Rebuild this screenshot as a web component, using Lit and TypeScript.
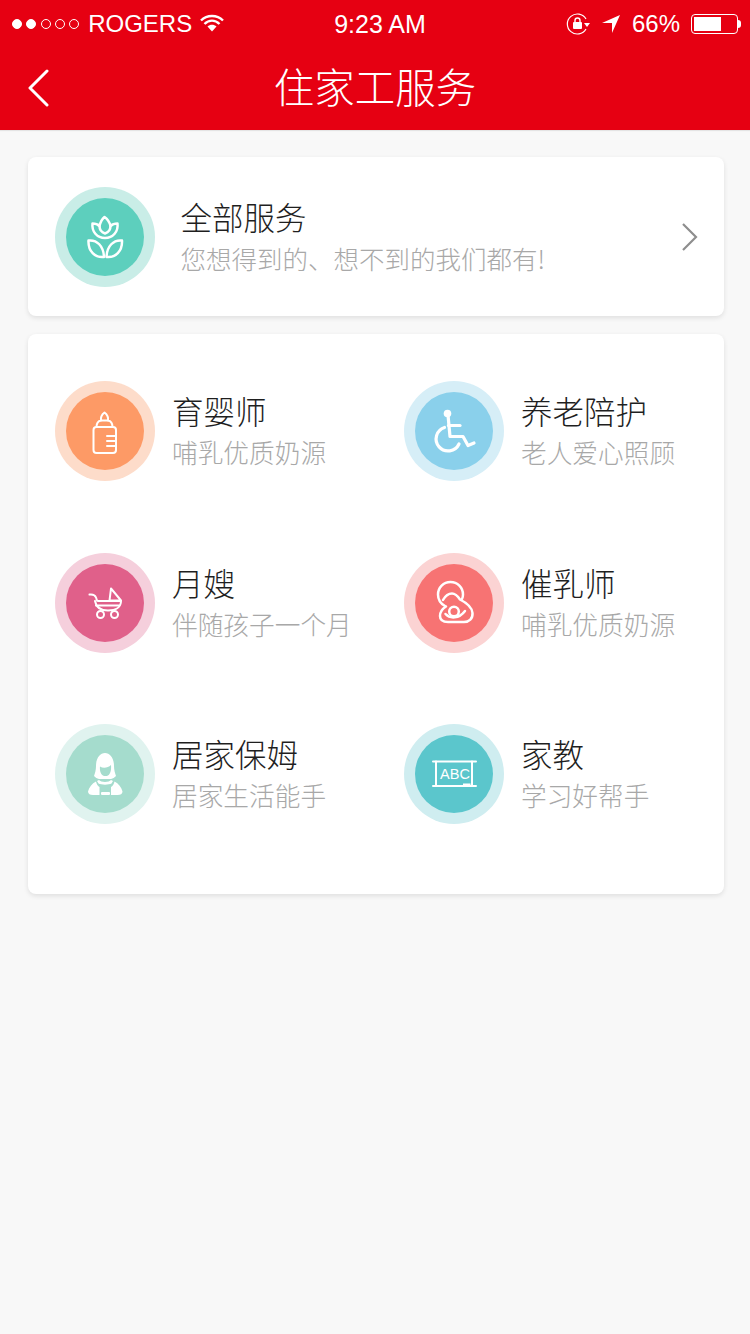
import { LitElement, html, css, svg } from 'lit';
import { customElement } from 'lit/decorators.js';

const flower = svg`
  <g class="line">
    <path d="M26.500 25.500C29.500 25.500 32 26.500 33.500 28C34.500 24 36 21 38.500 19C41.500 21 43.500 24 44.500 28C46 26.500 48.500 25.500 51.500 25.500C52.500 33.500 47 40 39 40C31 40 25.500 33.500 26.500 25.500Z" />
    <path d="M33.500 28C33.500 32 36 34.500 39 35.500C42 34.500 44.500 32 44.500 28" />
    <path d="M22.500 42.500C31 41.500 37.500 48 38 59C29 60 22 53 22.500 42.500Z" />
    <path d="M56 42.500C47.500 41.500 41 48 40.500 59C49.500 60 56.500 53 56 42.500Z" />
  </g>`;

const bottle = svg`
  <g class="line mid" transform="translate(-1 0)">
    <rect x="28.500" y="35" width="22.500" height="26" rx="3" />
    <path d="M31.500 35C31.500 31 33.500 29 36 28.500C35.500 25 37.500 22 39.500 20.500C41.500 22 43.500 25 43 28.500C45.500 29 47.500 31 47.500 35" />
    <path d="M36 28.500H43M42 44H50.500M42 49H50.500M42 54H50.500" />
  </g>`;

const wheelchair = svg`
  <circle class="solid" cx="32.500" cy="21.500" r="3.800" />
  <g class="line bold">
    <path d="M33 23L35 44.500H48L53 53.500L59 51" />
    <path d="M33.500 33.500H45" />
    <path d="M29.500 35.500A12 12 0 1 0 44 52" />
  </g>`;

const stroller = svg`
  <g class="line mid">
    <path d="M23.500 30.500C27 30 29 31 30 33.500C31 36 30.500 37 32 37H55C55 43 50 46.500 42 46.500C34 46.500 30 43 29 37" />
    <path d="M30 41.500H53.500" />
    <path d="M45 24.500L55 36.500H43.500Z" />
    <circle cx="34.500" cy="50.500" r="3.500" />
    <circle cx="48.500" cy="50.500" r="3.500" />
  </g>`;

const nursing = svg`
  <g class="line">
    <path d="M30 42C25.500 39.500 23 35.500 23 30.500C23 23.500 28.500 18 35.500 18C42.500 18 48 23.500 48 30.500C48 32 47.800 33.500 47 35" />
    <path d="M28 36C30 32.500 33.500 29.500 37 29.500C40.500 29.500 43 32.500 45 35.500C50 38 57 43 57.500 49C58 54.500 54 58 49 58H33C28 58 25 56 25 52C25 48 27 45 31 42.500" />
    <circle cx="39" cy="47.500" r="4.800" />
    <path d="M30.500 50C35 55 44 55 50 47" />
  </g>`;

const nanny = svg`
  <path class="solid" fill-rule="evenodd" d="M30 31C30 23 34 18 39 18C44 18 48 23 48 31C48 35 49 38 50 41C48.500 42.500 47 43.500 45 44C44.500 44 33.500 44 33 44C31 43.500 29.500 42.500 28 41C29 38 30 35 30 31ZM34 31.500C33.500 36 35 41 39.500 41C44 41 45.500 36 45 30C42 33 37 33.500 34 31.500Z" />
  <path class="solid" d="M33 45C35 47.500 43 47.500 45 45L47 46L45.500 48.500C43 50 35 50 32.500 48.500L31 46Z" />
  <path class="solid" d="M22 56.500C23 52.500 26 48.500 30 46.500C30.500 49 32 51.500 33.500 52V60H27C24 60 22 59 22 56.500Z" />
  <path class="solid" d="M56.500 56.500C55.500 52.500 52.500 48.500 48.500 46.500C48 49 46.500 51.500 45 52V60H51.500C54.500 60 56.500 59 56.500 56.500Z" />
  <rect class="solid" x="35" y="57" width="9" height="3" rx="1" />`;

const board = svg`
  <g class="line mid">
    <path d="M18 26.500H61M18 51H61" />
    <path d="M21 26.500V51M57 26.500V51" />
  </g>
  <rect class="solid" x="48" y="48.500" width="7.500" height="3" />
  <text class="abc" x="40" y="44" text-anchor="middle">ABC</text>`;

const services = [
  { title: '育婴师', sub: '哺乳优质奶源', tone: 'orange', icon: bottle },
  { title: '养老陪护', sub: '老人爱心照顾', tone: 'blue', icon: wheelchair },
  { title: '月嫂', sub: '伴随孩子一个月', tone: 'pink', icon: stroller },
  { title: '催乳师', sub: '哺乳优质奶源', tone: 'coral', icon: nursing },
  { title: '居家保姆', sub: '居家生活能手', tone: 'mint', icon: nanny },
  { title: '家教', sub: '学习好帮手', tone: 'cyan', icon: board },
];

@customElement('app-root')
export class AppRoot extends LitElement {
  static styles = css`
    :host {
      display: block;
      min-height: 1334px;
      background: #f8f8f8;
      font-family: 'Noto Sans CJK SC', 'Liberation Sans', sans-serif;
      font-weight: 300;
    }

    header {
      height: 130px;
      background: #e60012;
      color: #fff;
      box-shadow: 0 1px 1px rgba(0, 0, 0, 0.08);
    }

    .status {
      display: grid;
      grid-template-columns: 1fr auto 1fr;
      align-items: center;
      height: 48px;
      padding: 0 9px 0 12px;
      font-family: 'Liberation Sans', sans-serif;
      font-weight: 400;
      font-size: 24px;
    }

    .status > div {
      display: flex;
      align-items: center;
    }

    .status .right {
      justify-content: flex-end;
    }

    .status .time {
      padding-left: 7px;
      font-size: 25px;
    }

    .dots {
      display: flex;
      gap: 4.300px;
      margin-right: 9px;
    }

    .dots i {
      width: 10px;
      height: 10px;
      border-radius: 50%;
      border: 1px solid #fff;
      box-sizing: border-box;
    }

    .dots i.on {
      background: #fff;
    }

    .wifi {
      margin: 0 0 3px 8px;
    }

    .lock {
      margin-right: 12px;
    }

    .arrow {
      margin-right: 12px;
    }

    .battery {
      display: flex;
      align-items: center;
      margin-left: 11px;
    }

    .cell {
      box-sizing: border-box;
      width: 47px;
      height: 20px;
      padding: 2px;
      border: 1px solid #fff;
      border-radius: 4px;
    }

    .cell b {
      display: block;
      width: 27px;
      height: 100%;
      background: #fff;
    }

    .tip {
      width: 3px;
      height: 8px;
      background: #fff;
      border-radius: 0 3px 3px 0;
    }

    .nav {
      position: relative;
      display: flex;
      align-items: center;
      justify-content: center;
      height: 78px;
      padding-bottom: 4px;
      box-sizing: border-box;
      font-size: 40.500px;
    }

    .back {
      position: absolute;
      left: 27px;
      top: 21px;
    }

    main {
      display: flex;
      flex-direction: column;
      gap: 18px;
      padding: 27px 26px 0 28px;
    }

    .card {
      background: #fff;
      border-radius: 8px;
      box-shadow: 0 2px 5px rgba(0, 0, 0, 0.1);
    }

    .all {
      display: flex;
      align-items: center;
      height: 159px;
      padding: 0 26px 0 27px;
    }

    .all .text {
      flex: 1;
      margin-left: 25.500px;
    }

    .grid {
      display: grid;
      grid-template-columns: 349px 1fr;
      grid-auto-rows: 171.5px;
      height: 513px;
      padding: 47px 0 0 27px;
    }

    .item {
      display: flex;
      align-items: flex-start;
    }

    .item .text {
      margin-left: 17px;
      padding-top: 9px;
    }

    .item .sub {
      font-size: 25.700px;
    }

    .ring {
      display: flex;
      flex: none;
      align-items: center;
      justify-content: center;
      width: 100px;
      height: 100px;
      border-radius: 50%;
    }

    .disc {
      width: 78px;
      height: 78px;
      border-radius: 50%;
    }

    .disc svg {
      display: block;
    }

    .line {
      fill: none;
      stroke: #fff;
      stroke-width: 2.500;
      stroke-linecap: round;
      stroke-linejoin: round;
    }

    .line.mid {
      stroke-width: 2;
    }

    .line.bold {
      stroke-width: 3.200;
    }

    .solid {
      fill: #fff;
    }

    .abc {
      fill: #fff;
      font-family: 'Liberation Sans', sans-serif;
      font-size: 14.500px;
    }

    .teal { background: #c9ede7; }
    .teal .disc { background: #5dcfbd; }
    .orange { background: #fddcca; }
    .orange .disc { background: #fd9a66; }
    .blue { background: #d6eef7; }
    .blue .disc { background: #8ad0eb; }
    .pink { background: #f5cfdc; }
    .pink .disc { background: #e0608a; }
    .coral { background: #fbd3d3; }
    .coral .disc { background: #f77373; }
    .mint { background: #e0f3ef; }
    .mint .disc { background: #a5dccd; }
    .cyan { background: #cfedf0; }
    .cyan .disc { background: #5bc6cc; }

    .title {
      color: #1f1f1f;
      font-size: 31.500px;
      line-height: 41px;
      white-space: nowrap;
    }

    .sub {
      color: #a8a8a8;
      font-size: 25.500px;
      line-height: 41px;
      white-space: nowrap;
    }
  `;

  private ring(tone: string, icon: unknown) {
    return html`
      <div class="ring ${tone}">
        <div class="disc">
          <svg width="78" height="78" viewBox="0 0 78 78">${icon}</svg>
        </div>
      </div>
    `;
  }

  render() {
    return html`
      <header>
        <div class="status">
          <div>
            <span class="dots"><i class="on"></i><i class="on"></i><i></i><i></i><i></i></span>
            ROGERS
            <svg class="wifi" width="24" height="18" viewBox="0 0 24 18">
              <path d="M1 6.500C7 .5 17 .5 23 6.500M4.500 10C9 5.500 15 5.500 19.500 10" fill="none" stroke="#fff" stroke-width="2.400" />
              <path d="M7.500 12.500C10 10 14 10 16.500 12.500L12 17.500Z" fill="#fff" />
            </svg>
          </div>
          <div class="time">9:23 AM</div>
          <div class="right">
            <svg class="lock" width="24" height="22" viewBox="0 0 24 22">
              <path d="M20 16A10 10 0 1 1 20 6" fill="none" stroke="#fff" stroke-width="1.200" />
              <path d="M18 10H24L21 14Z" fill="#fff" />
              <rect x="7" y="9" width="9" height="7" rx="1" fill="#fff" />
              <path d="M9 9V7.500A2.500 2.500 0 0 1 14 7.500V9" fill="none" stroke="#fff" stroke-width="1.400" />
            </svg>
            <svg class="arrow" width="18" height="18" viewBox="0 0 18 18">
              <path d="M18 0L10 18V8H0Z" fill="#fff" />
            </svg>
            66%
            <span class="battery"><span class="cell"><b></b></span><span class="tip"></span></span>
          </div>
        </div>
        <div class="nav">
          <svg class="back" width="24" height="38" viewBox="0 0 24 38">
            <path d="M20 2L3 19L20 36" fill="none" stroke="#fff" stroke-width="3" stroke-linecap="round" stroke-linejoin="round" />
          </svg>
          住家工服务
        </div>
      </header>
      <main>
        <section class="card all">
          ${this.ring('teal', flower)}
          <div class="text">
            <div class="title">全部服务</div>
            <div class="sub">您想得到的、想不到的我们都有!</div>
          </div>
          <svg width="17" height="30" viewBox="0 0 17 30">
            <path d="M2 2L15 15L2 28" fill="none" stroke="#8e8e8e" stroke-width="2.200" />
          </svg>
        </section>
        <section class="card grid">
          ${services.map(
            (s) => html`
              <div class="item">
                ${this.ring(s.tone, s.icon)}
                <div class="text">
                  <div class="title">${s.title}</div>
                  <div class="sub">${s.sub}</div>
                </div>
              </div>
            `
          )}
        </section>
      </main>
    `;
  }
}
